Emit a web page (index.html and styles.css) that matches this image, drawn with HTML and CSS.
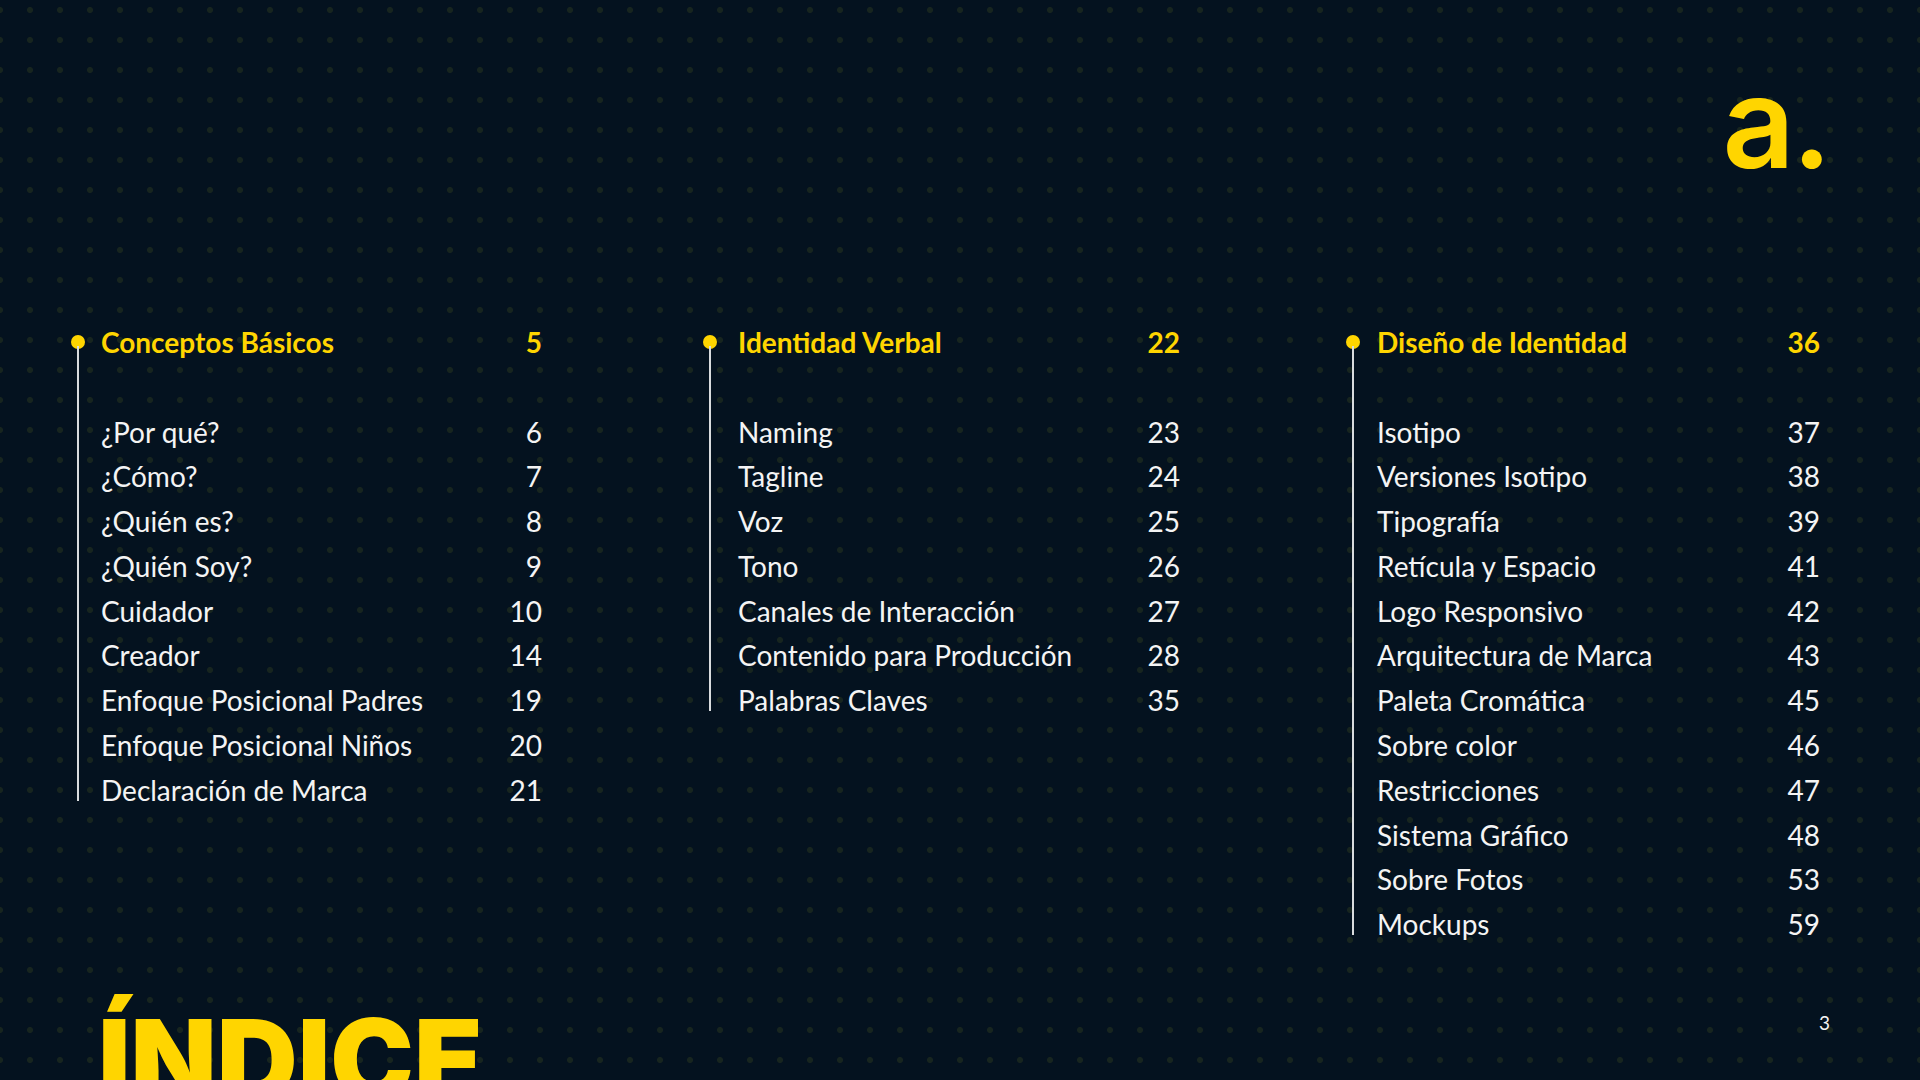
FILE: index.html
```html
<!DOCTYPE html>
<html lang="es">
<head>
<meta charset="utf-8">
<title>Índice</title>
<link rel="stylesheet" href="styles.css">
</head>
<body>
<div class="page">
  <header class="header">
    <div class="logo">a.</div>
  </header>

  <section class="toc">
    <div class="col col-1">
      <div class="rail"><span class="dot"></span><span class="line"></span></div>
      <div class="content">
        <div class="row title"><span>Conceptos Básicos</span><span>5</span></div>
        <ul class="items">
          <li class="row"><span>¿Por qué?</span><span>6</span></li>
          <li class="row"><span>¿Cómo?</span><span>7</span></li>
          <li class="row"><span>¿Quién es?</span><span>8</span></li>
          <li class="row"><span>¿Quién Soy?</span><span>9</span></li>
          <li class="row"><span>Cuidador</span><span>10</span></li>
          <li class="row"><span>Creador</span><span>14</span></li>
          <li class="row"><span>Enfoque Posicional Padres</span><span>19</span></li>
          <li class="row"><span>Enfoque Posicional Niños</span><span>20</span></li>
          <li class="row"><span>Declaración de Marca</span><span>21</span></li>
        </ul>
      </div>
    </div>

    <div class="col col-2">
      <div class="rail"><span class="dot"></span><span class="line"></span></div>
      <div class="content">
        <div class="row title"><span>Identidad Verbal</span><span>22</span></div>
        <ul class="items">
          <li class="row"><span>Naming</span><span>23</span></li>
          <li class="row"><span>Tagline</span><span>24</span></li>
          <li class="row"><span>Voz</span><span>25</span></li>
          <li class="row"><span>Tono</span><span>26</span></li>
          <li class="row"><span>Canales de Interacción</span><span>27</span></li>
          <li class="row"><span>Contenido para Producción</span><span>28</span></li>
          <li class="row"><span>Palabras Claves</span><span>35</span></li>
        </ul>
      </div>
    </div>

    <div class="col col-3">
      <div class="rail"><span class="dot"></span><span class="line"></span></div>
      <div class="content">
        <div class="row title"><span>Diseño de Identidad</span><span>36</span></div>
        <ul class="items">
          <li class="row"><span>Isotipo</span><span>37</span></li>
          <li class="row"><span>Versiones Isotipo</span><span>38</span></li>
          <li class="row"><span>Tipografía</span><span>39</span></li>
          <li class="row"><span>Retícula y Espacio</span><span>41</span></li>
          <li class="row"><span>Logo Responsivo</span><span>42</span></li>
          <li class="row"><span>Arquitectura de Marca</span><span>43</span></li>
          <li class="row"><span>Paleta Cromática</span><span>45</span></li>
          <li class="row"><span>Sobre color</span><span>46</span></li>
          <li class="row"><span>Restricciones</span><span>47</span></li>
          <li class="row"><span>Sistema Gráfico</span><span>48</span></li>
          <li class="row"><span>Sobre Fotos</span><span>53</span></li>
          <li class="row"><span>Mockups</span><span>59</span></li>
        </ul>
      </div>
    </div>
  </section>

  <footer class="footer">
    <h1 class="heading">ÍNDICE</h1>
    <span class="page-num">3</span>
  </footer>
</div>
</body>
</html>
```

FILE: styles.css
```css
* { box-sizing: border-box; }

html, body {
  margin: 0;
  padding: 0;
  background: #04121f;
}

.page {
  width: 1920px;
  height: 1080px;
  overflow: hidden;
  background-color: #04121f;
  background-image: radial-gradient(circle, #17251f 0, #17251f 2.6px, rgba(23,37,31,0) 3.4px);
  background-size: 30px 30px;
  background-position: -15px -5px;
  font-family: "Lato", "Liberation Sans", sans-serif;
  color: #f4f4f4;
  padding-top: 59px;
}

.header {
  display: flex;
  justify-content: flex-end;
  padding-right: 91px;
}

.logo {
  font-family: "Inter", "Liberation Sans", sans-serif;
  font-weight: 600;
  font-size: 126px;
  line-height: 1;
  color: #ffd500;
  letter-spacing: -3px;
}

.toc {
  display: grid;
  grid-template-columns: 471px 477px 474px;
  column-gap: 161px;
  padding-left: 71px;
  margin-top: 140px;
  align-items: start;
}

.col {
  display: flex;
  gap: 16px;
}

.col-2 {
  gap: 21px;
}

.col-3 {
  gap: 17px;
  margin-left: 5px;
  margin-right: -5px;
}

.rail {
  width: 14px;
  display: flex;
  flex-direction: column;
  align-items: center;
  padding-top: 10px;
  padding-bottom: 12px;
  flex: none;
}

.dot {
  width: 14px;
  height: 14px;
  border-radius: 50%;
  background: #ffd500;
  flex: none;
}

.line {
  flex: 1;
  width: 1.6px;
  background: #d9dcde;
  margin-top: -3px;
}

.content {
  flex: 1;
}

.row {
  display: flex;
  justify-content: space-between;
  font-size: 28px;
  line-height: 44.8px;
}

.title {
  font-weight: 700;
  color: #ffd500;
  line-height: 34px;
}

.items {
  list-style: none;
  margin: 50.5px 0 0;
  padding: 0;
}

.footer {
  display: flex;
  justify-content: space-between;
  align-items: flex-start;
  padding-left: 98px;
  padding-right: 90px;
  margin-top: 56px;
}

.heading {
  margin: 0;
  font-family: "Inter", "Liberation Sans", sans-serif;
  font-weight: 900;
  font-size: 112px;
  line-height: 1;
  color: #ffd500;
  letter-spacing: 0;
}

.page-num {
  font-size: 19px;
  line-height: 1;
  margin-top: 10px;
  color: #f4f4f4;
}
```
